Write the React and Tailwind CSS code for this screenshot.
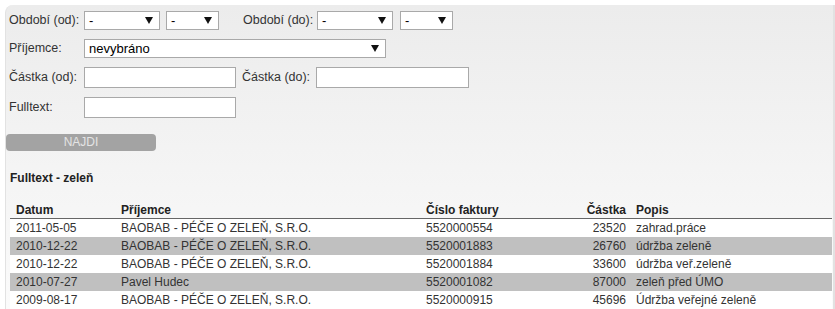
import React from "react";

const rows = [
  { date: "2011-05-05", who: "BAOBAB - PÉČE O ZELEŇ, S.R.O.", inv: "5520000554", amt: "23520", desc: "zahrad.práce" },
  { date: "2010-12-22", who: "BAOBAB - PÉČE O ZELEŇ, S.R.O.", inv: "5520001883", amt: "26760", desc: "údržba zeleně" },
  { date: "2010-12-22", who: "BAOBAB - PÉČE O ZELEŇ, S.R.O.", inv: "5520001884", amt: "33600", desc: "údržba veř.zeleně" },
  { date: "2010-07-27", who: "Pavel Hudec", inv: "5520001082", amt: "87000", desc: "zeleň před ÚMO" },
  { date: "2009-08-17", who: "BAOBAB - PÉČE O ZELEŇ, S.R.O.", inv: "5520000915", amt: "45696", desc: "Údržba veřejné zeleně" },
];

function Arrow() {
  return (
    <svg width="8" height="7" viewBox="0 0 8 7" className="shrink-0">
      <path d="M0 0 H8 L4 7 Z" fill="#111" />
    </svg>
  );
}

function Select({ value, className }) {
  return (
    <div className={"h-[19px] shrink-0 flex items-center justify-between bg-white border border-[#a9a9a9] pl-[4px] pr-[6px] text-[13px] text-black " + className}>
      <span>{value}</span>
      <Arrow />
    </div>
  );
}

function Input({ className }) {
  return <div className={"h-[21px] shrink-0 bg-white border border-[#a9a9a9] " + className} />;
}

function Label({ children, className = "" }) {
  return <span className={"shrink-0 whitespace-nowrap text-[12.5px] " + className}>{children}</span>;
}

export default function App() {
  return (
    <div className="w-[835px] h-[309px] overflow-hidden bg-white pl-[5px] pt-[5px] text-[12px] text-[#333]" style={{ fontFamily: "'Liberation Sans', Arial, sans-serif" }}>
      <div className="h-full w-[830px] rounded-tl-[8px] border-l border-r-2 border-[#e2e2e2] bg-linear-to-b from-[#ececec] to-[#fbfbfb]">
        <div className="flex flex-col gap-[9px] pt-[6px] pl-[3px]">
          <div className="flex items-center">
            <Label className="w-[75px]">Období (od):</Label>
            <Select value="-" className="w-[76px]" />
            <Select value="-" className="w-[53px] ml-[6px]" />
            <Label className="w-[74px] ml-[24px]">Období (do):</Label>
            <Select value="-" className="w-[76px]" />
            <Select value="-" className="w-[53px] ml-[7px]" />
          </div>
          <div className="flex items-center">
            <Label className="w-[75px]">Příjemce:</Label>
            <Select value="nevybráno" className="w-[302px]" />
          </div>
          <div className="flex items-center">
            <Label className="w-[75px]">Částka (od):</Label>
            <Input className="w-[152px]" />
            <Label className="w-[74px] ml-[6px]">Částka (do):</Label>
            <Input className="w-[153px]" />
          </div>
          <div className="flex items-center">
            <Label className="w-[75px]">Fulltext:</Label>
            <Input className="w-[152px]" />
          </div>
        </div>

        <button className="mt-[16px] w-[150px] h-[17px] rounded-[4px] bg-[#a3a3a3] text-[#e4e4e4] text-[12px] leading-[17px] text-center uppercase">
          Najdi
        </button>

        <div className="mt-[20px] ml-[4px] font-bold text-[#222] leading-[14px]">Fulltext - zeleň</div>

        <div className="mt-[16px] ml-[4px] w-[822px]">
          <div className="flex h-[18px] items-center border-b border-[#666] font-bold text-[#222]">
            <div className="w-[105px] pl-[6px]">Datum</div>
            <div className="w-[305px] pl-[6px]">Příjemce</div>
            <div className="w-[150px] pl-[6px]">Číslo faktury</div>
            <div className="w-[60px] pr-[4px] text-right">Částka</div>
            <div className="flex-1 pl-[6px]">Popis</div>
          </div>
          {rows.map((r, i) => (
            <div key={i} className={"flex h-[18px] items-center " + (i % 2 ? "bg-[#c0c0c0]" : "bg-white")}>
              <div className="w-[105px] pl-[6px]">{r.date}</div>
              <div className="w-[305px] pl-[6px]">{r.who}</div>
              <div className="w-[150px] pl-[6px]">{r.inv}</div>
              <div className="w-[60px] pr-[4px] text-right">{r.amt}</div>
              <div className="flex-1 pl-[6px]">{r.desc}</div>
            </div>
          ))}
        </div>
      </div>
    </div>
  );
}
